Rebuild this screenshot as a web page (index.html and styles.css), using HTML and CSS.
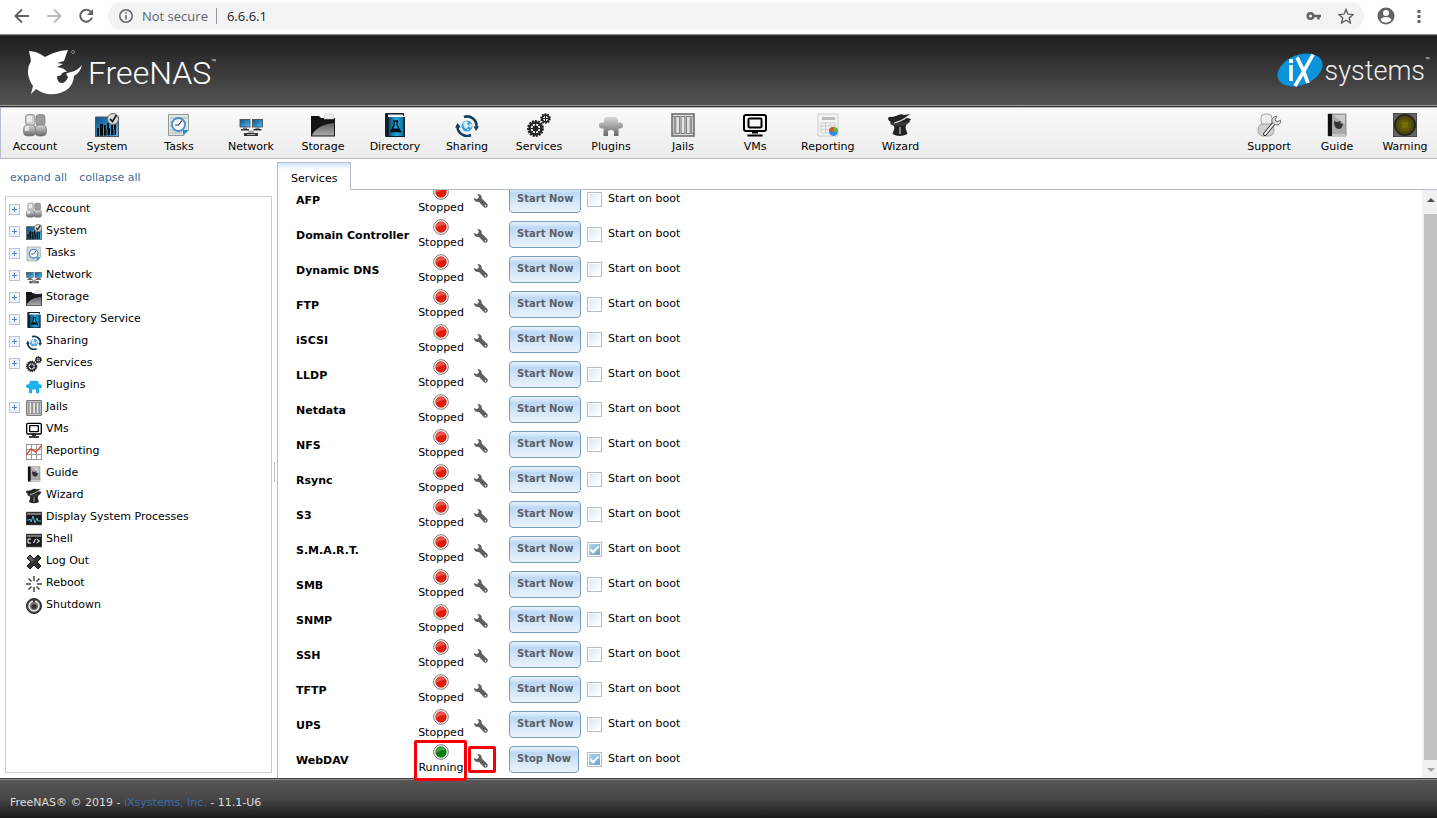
FILE: index.html
```html
<!DOCTYPE html>
<html lang="en">
<head>
	<meta charset="utf-8">
	<meta name="viewport" content="width=device-width">
	<title>FreeNAS - Services</title>
	<link rel="stylesheet" href="styles.css">
</head>
<body>
	<svg class="sprite" aria-hidden="true">
		<defs>
			<linearGradient id="grey" x1="0" y1="0" x2="0" y2="1">
				<stop offset="0" stop-color="#d8d8d8" />
				<stop offset="1" stop-color="#6a6666" />
			</linearGradient>
			<linearGradient id="dark" x1="0" y1="0" x2="0" y2="1">
				<stop offset="0" stop-color="#555" />
				<stop offset="1" stop-color="#aaa" />
			</linearGradient>
			<linearGradient id="blue" x1="0" y1="0" x2="1" y2="1">
				<stop offset="0" stop-color="#0e4f86" />
				<stop offset="1" stop-color="#4bc0f6" />
			</linearGradient>
			<linearGradient id="book" x1="0" y1="0" x2="1" y2="0">
				<stop offset="0" stop-color="#0b4f74" />
				<stop offset="0.5" stop-color="#25a9dc" />
				<stop offset="1" stop-color="#0e6d9c" />
			</linearGradient>
			<radialGradient id="lamp">
				<stop offset="0" stop-color="#8a8000" />
				<stop offset="1" stop-color="#3c3a08" />
			</radialGradient>
		</defs>
		<symbol id="account" viewBox="0 0 24 24">
			<g fill="url(#grey)" stroke="#777" stroke-width="0.7">
				<rect x="13" y="1.500" width="9" height="11" rx="3" fill="#a09c9c" />
				<rect x="12" y="12" width="11.500" height="11" rx="4" />
				<rect x="2.500" y="1.500" width="9.500" height="11" rx="3" fill="#ccc" />
				<rect x="0.500" y="12" width="12" height="11" rx="4" />
			</g>
			<path fill="#fff" opacity="0.600" d="M4 3h5v6H4zM2 13h4v5H2z" />
		</symbol>
		<symbol id="system" viewBox="0 0 24 24">
			<rect x="0.500" y="4" width="23" height="19.500" fill="url(#blue)" stroke="#555" />
			<path fill="#0a0f14" d="M2 23V15h2v2h1v-6h3v4h1v-3h2v4h1v-6h2v5h2v-3h2v4h1v-5h2v11z" />
			<path stroke="#58b8e8" stroke-width="0.8" d="M4.500 17v6M8.500 15v8M12 16v7M15.500 15v8M19 16v7" />
			<circle cx="18" cy="6" r="5.500" fill="#ddd" stroke="#666" />
			<path fill="none" stroke="#222" stroke-width="1.800" d="M15 6l2.500 2.500L21.500 2" />
		</symbol>
		<symbol id="tasks" viewBox="0 0 24 24">
			<path fill="#dfe6e4" stroke="#8a9a98" d="M1.500 1.500h20v15l-5 6h-15z" />
			<path stroke="#aaa" stroke-width="0.8" d="M3 5h17M3 9h3M3 13h3M3 17h5M3 20h12" />
			<path fill="#2a8cc8" d="M16 22v-5h6z" />
			<circle cx="11.500" cy="11.500" r="6.500" fill="#f8fbff" stroke="#4f8dca" stroke-width="2" />
			<path fill="none" stroke="#333" stroke-width="1.200" d="M15 7.500l-3.500 4.500H8" />
		</symbol>
		<symbol id="network" viewBox="0 0 24 24">
			<g fill="url(#blue)" stroke="#444" stroke-width="0.8">
				<rect x="1" y="6.500" width="10" height="7.500" />
				<rect x="13.500" y="6.500" width="10" height="7.500" />
			</g>
			<path fill="#777" d="M4 14.500h4v2H4zM16.500 14.500h4v2h-4z" />
			<path fill="#333" d="M2 16h8v1.500H2zM14.500 16h8v1.500h-8zM5 20h14v3H5z" />
			<path fill="#aaa" d="M9 17.500h6V20H9zM8 21h8v1H8z" />
		</symbol>
		<symbol id="storage" viewBox="0 0 24 24">
			<path fill="#111" d="M0 3h8l2 2h14v5H0z" />
			<path fill="#eee" stroke="#bbb" stroke-width="0.5" d="M13 5l1-4h8l1 5H13z" />
			<path fill="#161616" d="M0 7h24v16.500H0z" />
			<path fill="url(#dark)" d="M1 8h22v14.500H1z" />
			<path fill="#151515" d="M1 8h22v2C12 11 5 15 1 22z" />
		</symbol>
		<symbol id="directory" viewBox="0 0 24 24">
			<path fill="#10202b" d="M3 0h18v3H5v1h17v20H3q-1 0-1-1V1q0-1 1-1z" />
			<path fill="#e8eef0" d="M5 1.500h15V3H5z" />
			<path fill="url(#book)" d="M6 4h14.500v19H6z" />
			<path fill="none" stroke="#071018" stroke-width="1.300" d="M10 8h5M11 8v4L8 18.500h9.500L14 12V8" />
			<path fill="#071018" d="M10 15.500h5l1.500 2.500h-8z" />
		</symbol>
		<symbol id="sharing" viewBox="0 0 24 24">
			<circle cx="12" cy="13" r="5.500" fill="#3a9fda" />
			<path fill="#d5effc" d="M8 10l3-2 2 1-1 2 2 2-3 3-2-2zM15 10l2 2-1 3-2-1zM12 16l2 0-1 2z" />
			<g fill="none" stroke="#12405f" stroke-width="2.600">
				<path d="M9 4A9.500 9.500 0 0 1 21.500 14" />
				<path d="M2.500 13A9.500 9.500 0 0 0 16 22" />
			</g>
			<path fill="#12405f" d="M18.500 13.500h5.500L21 18zM0 14.500h6L2.500 10z" />
		</symbol>
		<symbol id="gears" viewBox="0 0 24 24">
			<g fill="none" stroke="#222">
				<circle cx="8.500" cy="15.500" r="7.500" stroke-width="2" stroke-dasharray="2 1.140" />
				<circle cx="8.500" cy="15.500" r="6" stroke-width="2.400" />
				<circle cx="8.500" cy="15.500" r="2" stroke-width="1.800" />
				<path d="M8.500 10v11M3 15.500h11M5 12l7 7M12 12l-7 7" />
				<circle cx="18.500" cy="5.500" r="4.500" stroke-width="1.600" stroke-dasharray="1.700 1.120" />
				<circle cx="18.500" cy="5.500" r="3.400" stroke-width="1.800" />
				<path d="M18.500 2v7M15 5.500h7" />
			</g>
		</symbol>
		<symbol id="plugins" viewBox="0 0 24 24">
			<path d="M5 7q0-3 3-3h8q3 0 3 3v2.500h2q3 0 3 3t-3 3h-1.500V23H15v-4q0-2-3-2t-3 2v4H4.500v-7.500H3q-3 0-3-3t3-3h2z" />
		</symbol>
		<symbol id="jails" viewBox="0 0 24 24">
			<path fill="#e2e2e2" stroke="#666" stroke-width="1.500" d="M1 1h22v22H1z" />
			<path stroke="#777" d="M1 3.500h22M1 20.500h22" />
			<path stroke="#777" stroke-width="2.500" d="M4 3v18M9.300 3v18M14.700 3v18M20 3v18" />
			<path stroke="#ddd" stroke-width="0.600" d="M4 3v18M9.300 3v18M14.700 3v18M20 3v18" />
		</symbol>
		<symbol id="vms" viewBox="0 0 24 24">
			<g fill="none" stroke="#000">
				<rect x="1" y="2" width="22" height="16" rx="2" stroke-width="2" />
				<rect x="5.500" y="5.500" width="13" height="9" rx="1" stroke-width="2" />
				<path stroke-width="2" d="M9 19.500h6M4.500 22.500h15" />
			</g>
		</symbol>
		<symbol id="reporting" viewBox="0 0 24 24">
			<path fill="#f3f3f3" stroke="#bbb" stroke-width="0.700" d="M2 1h20v22H2z" />
			<path fill="#bbb" d="M6 4h13v3H6z" />
			<path fill="none" stroke="#ccc" d="M5 10h14v10H5zM5 13h14M5 16.500h14M9.500 10v10M14 10v10" />
			<circle cx="17.500" cy="18.500" r="4.500" fill="#3a8be0" />
			<path fill="#e04a28" d="M17.500 18.500H13a4.500 4.500 0 0 1 4.500-4.500z" />
			<path fill="#68b82c" d="M17.500 18.500V14a4.500 4.500 0 0 1 4.500 4.500z" />
		</symbol>
		<symbol id="wizard" viewBox="0 0 24 24">
			<path fill="#222" d="M5 11h13.500l-1 4 2 6q-8 4-15 0l2-6z" />
			<path fill="#888" d="M11 14h2v7h-2z" />
			<ellipse cx="12" cy="9" rx="10" ry="4" fill="#3a3a3a" transform="rotate(-6 12 9)" />
			<path fill="#222" d="M0 6q0-3 4-2l4-1q5-3 8-1l6-1-4 4q5 0 5 2-6 3-13 3Q1 10 0 6z" />
			<path fill="none" stroke="#ddd" stroke-width="1.200" d="M6 10q8-2 13-6l4-3" />
		</symbol>
		<symbol id="support" viewBox="0 0 24 24">
			<g fill="url(#grey)" stroke="#888" stroke-width="0.700">
				<rect x="4" y="1" width="11" height="11" rx="4" fill="#eee" />
				<rect x="1" y="11" width="16" height="12" rx="5" fill="#d0d0d0" />
			</g>
			<path stroke="#222" stroke-width="3.600" stroke-linecap="round" d="M8 21L18 9" />
			<path stroke="#eee" stroke-width="2" stroke-linecap="round" d="M8 21L18 9" />
			<path fill="#ddd" stroke="#555" stroke-width="0.800" d="M15 9q-1-5 5-6l-2 4 2 2 4-2q0 5-5 5-2 0-4-3z" />
		</symbol>
		<symbol id="guide" viewBox="0 0 24 24">
			<path fill="#aaa" stroke="#777" stroke-width="0.700" d="M3 1h18v22H3z" />
			<path fill="#ccc" d="M8 2h12v9z" />
			<path fill="#111" d="M3 1h4v22H3z" />
			<path fill="#333" d="M9 8l3 1 4-1-1 2 3 1q-1 5-4 5-5 0-5-8z" />
			<path fill="#eee" d="M7 21.500h14v1H7z" />
		</symbol>
		<symbol id="warning" viewBox="0 0 24 24">
			<path fill="#666" stroke="#333" d="M0 0h24v24H0z" />
			<circle cx="12" cy="12" r="11" fill="#222" />
			<circle cx="12" cy="12" r="9.500" fill="url(#lamp)" />
			<path stroke="#555210" stroke-width="0.400" d="M4 8h16M3 12h18M4 16h16M8 4v16M12 3v18M16 4v16" />
		</symbol>
		<symbol id="chart" viewBox="0 0 16 16">
			<path fill="none" stroke="#999" d="M.5 0v16M5.500 0v16M10.500 0v16M15.500 0v16M0 .5h16M0 5.500h16M0 10.500h16M0 15.500h16" />
			<path fill="none" stroke="#e0503c" stroke-width="1.500" d="M0 11l5-6 5 3 6-7" />
		</symbol>
		<symbol id="processes" viewBox="0 0 16 16">
			<path fill="#1c1819" stroke="#777" stroke-width="0.600" d="M0 2h16v13H0z" />
			<path fill="#777" d="M1 3h14v2H1z" />
			<path fill="none" stroke="#4fb4d8" d="M1 10h2l1-1 1 3 2-6 2 7 2-5 1 3h3" />
		</symbol>
		<symbol id="shell" viewBox="0 0 16 16">
			<path fill="#1c1819" stroke="#777" stroke-width="0.600" d="M0 2h16v13H0z" />
			<path fill="#777" d="M1 3h14v2H1z" />
			<path fill="none" stroke="#fff" d="M5 7H2v4h3M7.500 11l2-4M10.500 7l3 2-3 2" />
		</symbol>
		<symbol id="logout" viewBox="0 0 16 16">
			<path fill="#333" stroke="#111" d="M1 4l3-3 4 4 4-4 3 3-4 4 4 4-3 3-4-4-4 4-3-3 4-4z" />
			<path fill="#666" d="M2 4l2-2 4 4-2 2z" />
		</symbol>
		<symbol id="reboot" viewBox="0 0 16 16">
			<path stroke="#444" stroke-width="1.500" d="M8 0v5M8 11v5M0 8h5M11 8h5M2.500 2.500l3 3M10.500 10.500l3 3M13.500 2.500l-3 3M5.500 10.500l-3 3" />
		</symbol>
		<symbol id="shutdown" viewBox="0 0 16 16">
			<circle cx="8" cy="8" r="7.500" fill="#444" stroke="#222" />
			<circle cx="8" cy="8" r="5" fill="#777" stroke="#eee" stroke-width="1.500" />
			<circle cx="8" cy="8.500" r="2.500" fill="#333" />
			<path stroke="#333" stroke-width="2" d="M8 2v2" />
		</symbol>
		<symbol id="wrench" viewBox="0 0 14 14">
			<path fill="#606060" d="M3.500 0Q8 0 7.800 4.500L13.300 10Q14.300 11.500 13.300 12.700L12.700 13.300Q11.500 14.300 10 13.300L5 8Q0 8.500 0 4L3 5.200 5 3z" />
			<circle cx="11.500" cy="11.700" r="0.800" fill="#fff" />
		</symbol>
		<symbol id="light" viewBox="0 0 16 16">
			<circle cx="8" cy="8" r="7.300" fill="#fff" stroke="#777" />
			<circle cx="8" cy="8" r="5.700" />
			<path fill="#fff" opacity="0.250" d="M2.500 9a5.700 5.700 0 0 1 10.500-3.500Q7 6 2.500 9z" />
		</symbol>
	</svg>

	<div class="browser">
		<button type="button" aria-label="Back"><svg width="16" height="16"><path d="M15 8H2M8 1.500L1.500 8 8 14.500" /></svg></button>
		<button type="button" class="off" aria-label="Forward"><svg width="16" height="16"><path d="M1 8h13M8 1.500L14.500 8 8 14.500" /></svg></button>
		<button type="button" aria-label="Reload"><svg width="16" height="16"><path d="M13 4A6 6 0 1 0 14 9.500" /><path class="solid" d="M15 1v6H9z" /></svg></button>
		<div class="address">
			<svg width="14" height="14"><circle cx="7" cy="7" r="6.200" /><path d="M7 6v4.500M7 3.200v1.600" /></svg>
			<label for="url">Not secure</label>
			<input id="url" type="text" value="6.6.6.1">
			<button type="button" aria-label="Passwords"><svg width="16" height="16"><circle cx="4.500" cy="8" r="2.800" stroke-width="2.400" /><path stroke-width="2.400" d="M7 8h8M12.500 8v3.500" /></svg></button>
			<button type="button" aria-label="Bookmark"><svg width="16" height="16"><path stroke-width="1.400" d="M8 1.500l2 4.700 5 .4-3.800 3.300 1.200 5L8 12.200l-4.400 2.700 1.200-5L1 6.600l5-.4z" /></svg></button>
		</div>
		<button type="button" aria-label="Profile"><svg width="18" height="18"><path class="solid" fill-rule="evenodd" d="M9 .5a8.500 8.500 0 1 0 0 17 8.500 8.500 0 0 0 0-17zM9 3a3 3 0 1 1 0 6 3 3 0 0 1 0-6zM3.500 13q1-3 5.500-3t5.500 3q-2 2.700-5.500 2.700T3.500 13z" /></svg></button>
		<button type="button" aria-label="Menu"><svg width="16" height="16"><path class="solid" d="M6.500 2h3v3h-3zM6.500 7h3v3h-3zM6.500 12h3v3h-3z" /></svg></button>
	</div>

	<header class="banner">
		<a class="logo" href="#">
			<svg width="54" height="46" viewBox="0 0 54 46">
				<path fill="#fff" d="M1 2q8 0 16 6Q27 2 40 1q-2 5-4 11l-7 2 6 1-6 3q8 1 10 5 1 1 4 0 6-1 11-7-2 8-8 11-1 13-14 17-13 4-24-4l-5 5 2-8Q-4 24 3 12z" />
				<path fill="#333" d="M41 23q-6-1-8 3-3 2-4 1 0 6 4 7 5 0 7-6l-2-3z" />
				<circle cx="45" cy="3" r="1.500" fill="none" stroke="#aaa" stroke-width="0.700" />
			</svg>
			<span>FreeNAS</span><sup>™</sup>
		</a>
		<a class="logo ix" href="#">
			<svg width="46" height="36" viewBox="0 0 46 36">
				<ellipse cx="23" cy="18" rx="23.500" ry="15" fill="#0b93dc" transform="rotate(-22 23 18)" />
				<path fill="none" stroke="#fff" stroke-width="3.600" d="M14 13v16M20 5.500Q27 18 31 31M36 2.500Q28 18 18 34" />
				<path fill="#fff" d="M12 7h4v4h-4z" />
			</svg>
			<span>systems</span><sup>™</sup>
		</a>
	</header>

	<nav class="toolbar">
		<a href="#"><svg><use href="#account" /></svg>Account</a>
		<a href="#"><svg><use href="#system" /></svg>System</a>
		<a href="#"><svg><use href="#tasks" /></svg>Tasks</a>
		<a href="#"><svg><use href="#network" /></svg>Network</a>
		<a href="#"><svg><use href="#storage" /></svg>Storage</a>
		<a href="#"><svg><use href="#directory" /></svg>Directory</a>
		<a href="#"><svg><use href="#sharing" /></svg>Sharing</a>
		<a href="#"><svg><use href="#gears" /></svg>Services</a>
		<a href="#"><svg class="metal"><use href="#plugins" /></svg>Plugins</a>
		<a href="#"><svg><use href="#jails" /></svg>Jails</a>
		<a href="#"><svg><use href="#vms" /></svg>VMs</a>
		<a href="#"><svg><use href="#reporting" /></svg>Reporting</a>
		<a href="#"><svg><use href="#wizard" /></svg>Wizard</a>
		<div class="right">
			<a href="#"><svg><use href="#support" /></svg>Support</a>
			<a href="#"><svg><use href="#guide" /></svg>Guide</a>
			<a href="#"><svg><use href="#warning" /></svg>Warning</a>
		</div>
	</nav>

	<div class="main">
		<aside class="side">
			<div class="links"><a href="#">expand all</a><a href="#">collapse all</a></div>
			<ul class="tree"></ul>
		</aside>
		<div class="splitter"><span></span></div>
		<main class="pane">
			<div class="tabs"><a class="tab" href="#">Services</a></div>
			<div class="view">
				<div class="scrolled">
					<table class="services"></table>
				</div>
				<div class="scrollbar">
					<i class="up"></i>
					<i class="thumb"></i>
					<i class="down"></i>
				</div>
			</div>
		</main>
	</div>

	<footer class="footer">FreeNAS® © 2019 - <a href="#">iXsystems, Inc.</a> - 11.1-U6</footer>

	<script>
		// [label, icon, has children]
		let tree = [
			['Account', 'account', 1],
			['System', 'system', 1],
			['Tasks', 'tasks', 1],
			['Network', 'network', 1],
			['Storage', 'storage', 1],
			['Directory Service', 'directory', 1],
			['Sharing', 'sharing', 1],
			['Services', 'gears', 1],
			['Plugins', 'plugins', 0],
			['Jails', 'jails', 1],
			['VMs', 'vms', 0],
			['Reporting', 'chart', 0],
			['Guide', 'guide', 0],
			['Wizard', 'wizard', 0],
			['Display System Processes', 'processes', 0],
			['Shell', 'shell', 0],
			['Log Out', 'logout', 0],
			['Reboot', 'reboot', 0],
			['Shutdown', 'shutdown', 0]
		];
		let services = ['AFP', 'Domain Controller', 'Dynamic DNS', 'FTP', 'iSCSI', 'LLDP', 'Netdata', 'NFS', 'Rsync',
			'S3', 'S.M.A.R.T.', 'SMB', 'SNMP', 'SSH', 'TFTP', 'UPS', 'WebDAV'];
		let running = ['WebDAV'];
		let onBoot = ['S.M.A.R.T.', 'WebDAV'];

		document.querySelector('.tree').innerHTML = tree.map(([label, icon, children]) => `
			<li>
				${children ? '<button type="button" class="expand" aria-label="Expand ' + label + '"></button>' : '<span class="leaf"></span>'}
				<a href="#"><svg><use href="#${icon}" /></svg>${label}</a>
			</li>`).join('');

		document.querySelector('.services').innerHTML = services.map((name, i) => {
			let on = running.includes(name);
			return `
			<tr class="${on ? 'running' : 'stopped'}">
				<th scope="row">${name}</th>
				<td class="status"><div><svg><use href="#light" /></svg>${on ? 'Running' : 'Stopped'}</div></td>
				<td class="config"><button type="button" aria-label="${name} settings"><svg><use href="#wrench" /></svg></button></td>
				<td class="action"><button type="button">${on ? 'Stop Now' : 'Start Now'}</button></td>
				<td class="boot"><div><input type="checkbox" id="boot${i}" ${onBoot.includes(name) ? 'checked' : ''}><label for="boot${i}">Start on boot</label></div></td>
			</tr>`;
		}).join('');
	</script>
</body>
</html>
```
FILE: styles.css
```css
*, *::after {
	box-sizing: border-box;
}

body {
	background: #fff;
	color: #000;
	display: flex;
	flex-direction: column;
	font: 11px/14px Verdana, "DejaVu Sans", sans-serif;
	height: 100vh;
	margin: 0;
	overflow: hidden;
}
a {
	color: inherit;
	text-decoration: none;
}
button {
	background: none;
	border: 0;
	font: inherit;
	padding: 0;
}
svg {
	display: block;
	flex: none;
}
.sprite {
	height: 0;
	position: absolute;
	width: 0;
}

/* browser bar */
.browser {
	align-items: center;
	display: flex;
	flex: none;
	gap: 16px;
	height: 34px;
	padding: 0 10px 2px 14px;
}
.browser svg {
	fill: none;
	stroke: #5f6368;
	stroke-width: 2;
}
.browser .solid {
	fill: #5f6368;
	stroke: none;
}
.browser .off svg {
	stroke: #bbb;
}
.address {
	align-items: center;
	background: #f1f3f4;
	border-radius: 14px;
	color: #5f6368;
	display: flex;
	flex: 1;
	font: 13px/20px "Open Sans", "Noto Sans", sans-serif;
	gap: 8px;
	height: 28px;
	margin-right: -3px;
	margin-left: -2px;
	padding: 0 10px 0 11px;
}
.address svg {
	stroke-width: 1.5;
}
.address label {
	padding-left: 1px;
}
.address input {
	background: none;
	border: 0;
	border-left: 1px solid #999;
	color: #222;
	flex: 1;
	font: inherit;
	height: 16px;
	padding: 0 10px;
}
.address button + button {
	margin-left: 8px;
}

/* banner */
.banner {
	align-items: center;
	background: linear-gradient(#1e1e1e, #222 10%, #555);
	border-bottom: 1px solid #333;
	border-top: 1px solid #888;
	box-shadow: inset 0 1px #333, inset 0 -1px #999;
	display: flex;
	flex: none;
	height: 73px;
	justify-content: space-between;
	padding: 2px 7px 0 28px;
}
.logo {
	align-items: center;
	color: #fff;
	display: flex;
	font: 300 32px/46px Roboto, sans-serif;
}
.logo span {
	margin-left: 6px;
	padding-top: 2px;
}
.logo sup {
	align-self: flex-start;
	font-size: 8px;
	line-height: 30px;
}
.ix {
	color: #eee;
	font-size: 27px;
	padding-bottom: 4px;
}
.ix span {
	margin-left: 2px;
}

/* toolbar */
.toolbar {
	background: linear-gradient(#fafafa, #ececec);
	border: 1px solid #b5bccc;
	border-right: 0;
	display: flex;
	flex: none;
	gap: 4px;
	height: 52px;
}
.toolbar a {
	align-items: center;
	display: flex;
	flex-direction: column;
	gap: 3px;
	min-width: 68px;
	padding: 5px 8px 0;
}
.toolbar svg {
	height: 24px;
	width: 24px;
}
.metal {
	fill: url(#grey);
}
.right {
	display: flex;
	gap: 4px;
	margin-left: auto;
}
.toolbar .right a {
	min-width: 64px;
}

/* left side */
.main {
	display: flex;
	flex: 1;
	min-height: 0;
	position: relative;
	z-index: 1;
}
.side {
	display: flex;
	flex: none;
	flex-direction: column;
	padding: 12px 0 5px 5px;
	width: 272px;
}
.links {
	color: #3f6c96;
	display: flex;
	gap: 12px;
	padding: 0 5px 11px;
}
.tree {
	border: 1px solid #ccc;
	fill: #1cb4ea;
	flex: 1;
	list-style: none;
	margin: 0;
	padding: 1px 3px;
}
.tree li {
	align-items: center;
	display: flex;
	gap: 6px;
	height: 22px;
}
.tree a {
	align-items: center;
	display: flex;
	gap: 4px;
}
.tree svg {
	height: 16px;
	margin-top: 1px;
	width: 16px;
}
.expand, .leaf {
	height: 11px;
	width: 11px;
}
.expand {
	background:
		linear-gradient(#5f7fb8, #5f7fb8) center / 5px 1px no-repeat,
		linear-gradient(#5f7fb8, #5f7fb8) center / 1px 5px no-repeat,
		#eef3fa;
	border: 1px solid #b8c4de;
}
.splitter {
	align-items: center;
	display: flex;
	flex: none;
	justify-content: center;
	padding-top: 6px;
	width: 5px;
}
.splitter span {
	background: #b5bcc7;
	height: 20px;
	width: 1px;
}

/* services pane */
.pane {
	border-left: 1px solid #b5bccc;
	display: flex;
	flex: 1;
	flex-direction: column;
	margin-top: 3px;
	min-width: 0;
}
.tabs {
	border-bottom: 1px solid #b5bccc;
	display: flex;
	flex: none;
	height: 28px;
}
.tab {
	background: linear-gradient(#cfe5fa, #fff 7px);
	border: solid #b5bccc;
	border-width: 1px 1px 0 0;
	height: 28px;
	line-height: 32px;
	padding: 0 13px;
}
.view {
	display: flex;
	flex: 1;
	min-height: 0;
}
/* only the top edge clips: the list stands scrolled to its end */
.scrolled {
	clip-path: inset(0 0 -4px 0);
	display: flex;
	flex: 1;
	flex-direction: column;
	justify-content: flex-end;
	padding: 0 0 1px 18px;
}
.services {
	border-collapse: collapse;
	flex: none;
	table-layout: fixed;
	width: 400px;
}
.services tr {
	height: 35px;
}
.services th, .services td {
	height: 35px;
	padding: 0;
	text-align: left;
}
.services th {
	padding-top: 2px;
	white-space: nowrap;
	width: 118px;
}
.services .status {
	position: relative;
	width: 54px;
}
.status div {
	align-items: center;
	display: flex;
	flex-direction: column;
	gap: 1px;
}
.status svg {
	height: 16px;
	width: 16px;
}
.stopped {
	fill: #e01c08;
}
.running {
	fill: #067f0c;
}
.services .config {
	padding-top: 2px;
	position: relative;
	width: 41px;
}
.config button {
	display: block;
	margin-left: 6px;
}
.config svg {
	height: 14px;
	width: 14px;
}
.running .status::after, .running .config::after {
	border: 3px solid #f50008;
	border-radius: 2px;
	content: "";
	position: absolute;
}
.running .status::after {
	inset: -2px 1px -4px 0;
}
.running .config::after {
	height: 27px;
	left: 0;
	top: 4px;
	width: 28px;
}
.services .action {
	width: 78px;
}
.action button {
	background: linear-gradient(#eaf4fe, #bcd8f4 6px, #cfe3f8 50%, #ebf3fc);
	border: 1px solid #769dc0;
	border-radius: 4px;
	color: #5c6066;
	display: block;
	font-size: 10px;
	font-weight: bold;
	height: 27px;
	padding: 0 7px 2px;
	white-space: nowrap;
}
.boot div {
	align-items: center;
	display: flex;
	gap: 6px;
}
.boot input {
	appearance: none;
	background: linear-gradient(135deg, #dde9f2, #fff) center / 11px 11px no-repeat;
	border: 1px solid #b5bccc;
	height: 15px;
	margin: 0;
	width: 15px;
}
.boot input:checked {
	background: linear-gradient(135deg, #b4d6f0, #68a2cc) center / 11px 11px no-repeat;
	display: grid;
	justify-content: center;
	padding-top: 3px;
}
.boot input:checked::after {
	border: solid #fff;
	border-width: 0 0 2px 2px;
	content: "";
	height: 5px;
	transform: rotate(-45deg);
	width: 9px;
}
.boot label {
	padding-bottom: 2px;
}
.scrollbar {
	align-items: center;
	background: #f1f1f1;
	display: flex;
	flex: none;
	flex-direction: column;
	gap: 12px;
	padding: 8px 0 6px 2px;
	width: 15px;
}
.up, .down {
	border: solid transparent;
	border-width: 0 4px;
}
.up {
	border-bottom: 4px solid #505050;
}
.down {
	border-top: 4px solid #a3a3a3;
	margin-top: -4px;
}
.thumb {
	align-self: stretch;
	background: #c1c1c1;
	flex: 1;
}

.footer {
	background: linear-gradient(#585858, #484646 50%, #1a1a1c);
	border-top: 1px solid #444;
	box-shadow: inset 0 1px #888;
	color: #ddd;
	flex: none;
	height: 40px;
	line-height: 47px;
	padding-left: 10px;
}
.footer a {
	color: #3870a8;
}
```
